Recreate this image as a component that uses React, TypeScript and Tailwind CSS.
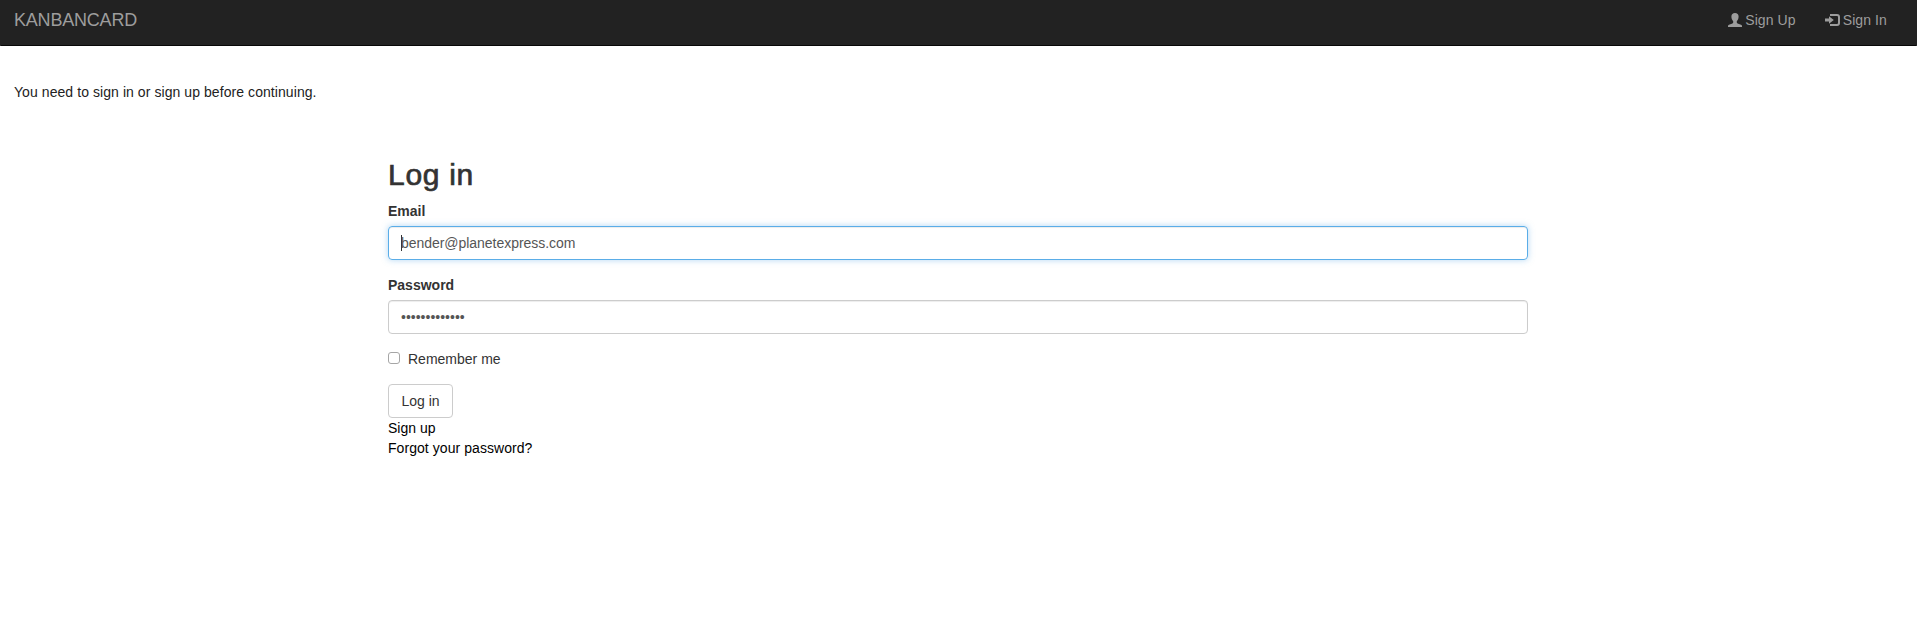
import type { ReactNode } from "react";

function UserIcon() {
  return (
    <svg className="block h-[14px] w-[14px]" viewBox="0 0 14 14" fill="currentColor" aria-hidden="true">
      <path d="M7 0C4.800 0 3.400 1.400 3.400 3.600c0 1.900.7 3.600 1.800 4.700v1.100c0 .5-.3.800-.8 1L1 11.800c-.7.3-1 .7-1 1.300v.9h14v-.9c0-.6-.3-1-1-1.300l-3.400-1.400c-.5-.2-.8-.5-.8-1V8.300c1.100-1.100 1.800-2.800 1.800-4.700C10.600 1.400 9.200 0 7 0z" />
    </svg>
  );
}

function LogInIcon() {
  return (
    <svg className="block h-[14px] w-[15px]" viewBox="0 0 15 14" fill="currentColor" aria-hidden="true">
      <path d="M5 1h7a3 3 0 0 1 3 3v6a3 3 0 0 1-3 3H5v-2h7a1 1 0 0 0 1-1V4a1 1 0 0 0-1-1H5z" />
      <path d="M4 3.200 8.800 7 4 10.800V8.500H0v-3h4z" />
    </svg>
  );
}

function NavLink({ icon, children }: { icon: ReactNode; children: ReactNode }) {
  return (
    <a href="#" className="flex items-center gap-[3px] text-sm leading-5 tracking-[0.1px] text-[#9d9d9d]">
      {icon}
      <span>{children}</span>
    </a>
  );
}

export default function App() {
  return (
    <div className="min-h-[631px] bg-white font-['Liberation_Sans',Arial,sans-serif] text-sm leading-5 text-[#333]">
      <nav className="flex h-[46px] items-start justify-between rounded-b-[1px] border-b border-[#080808] bg-[#222] pr-[30px] pl-[14px]">
        <a href="#" className="pt-[10px] text-[18px] leading-5 tracking-[-0.2px] text-[#9d9d9d]">
          KANBANCARD
        </a>
        <div className="flex gap-[29px] pt-[10px]">
          <NavLink icon={<UserIcon />}>Sign Up</NavLink>
          <NavLink icon={<LogInIcon />}>Sign In</NavLink>
        </div>
      </nav>

      <p className="mt-9 pl-[14px] tracking-[0.07px] text-[#222]">You need to sign in or sign up before continuing.</p>

      <main className="mt-14 ml-[388px] w-[1140px]">
        <h2 className="mb-[10px] text-[30px] leading-[33px] font-medium tracking-[0.7px] [-webkit-text-stroke:0.7px_#333]">
          Log in
        </h2>
        <form>
          <label htmlFor="email" className="mb-[5px] block font-bold">Email</label>
          <div
            id="email"
            className="flex h-[34px] items-center rounded border border-[#5aade8] px-3 tracking-[-0.04px] text-[#555] shadow-[inset_0_1px_1px_rgba(0,0,0,0.075),0_0_6px_rgba(102,175,233,0.5)]"
          >
            <span className="-mr-px h-4 w-px bg-[#333]" />
            <span>bender@planetexpress.com</span>
          </div>
          <label htmlFor="password" className="mt-[15px] mb-[5px] block font-bold">Password</label>
          <div
            id="password"
            className="flex h-[34px] items-center rounded border border-[#ccc] px-3 text-[#555] shadow-[inset_0_1px_1px_rgba(0,0,0,0.075)]"
          >
            •••••••••••••
          </div>
          <label className="mt-[15px] flex items-start">
            <span className="mt-[3px] mr-2 h-3 w-3 rounded-[3px] border border-[#a6a6a6] bg-white" />
            <span>Remember me</span>
          </label>
          <button type="button" className="mt-[15px] block h-[34px] w-[65px] rounded border border-[#ccc] bg-white">
            Log in
          </button>
        </form>
        <a href="#" className="block text-black">Sign up</a>
        <a href="#" className="block tracking-[0.06px] text-black">Forgot your password?</a>
      </main>
    </div>
  );
}
